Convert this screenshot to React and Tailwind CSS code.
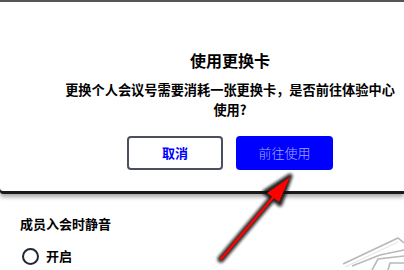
import React from "react";

const Arrow = () => (
  <svg className="absolute left-0 top-0 pointer-events-none" width="404" height="270" viewBox="0 0 404 270">
    <defs>
      <filter id="glow" x="-20%" y="-20%" width="140%" height="140%">
        <feGaussianBlur stdDeviation="1.6" />
      </filter>
    </defs>
    <g filter="url(#glow)" opacity="0.9">
      <line x1="221" y1="259" x2="276" y2="194" stroke="#111" strokeWidth="7" strokeLinecap="round" />
      <polygon points="290,176 265,192 280,204" fill="#111" stroke="#111" strokeWidth="5" strokeLinejoin="round" />
    </g>
    <line x1="221" y1="259" x2="276" y2="194" stroke="#ff0000" strokeWidth="2.6" strokeLinecap="round" />
    <polygon points="290,177 267,193 279,202" fill="#ff0000" />
  </svg>
);

const Watermark = () => (
  <svg className="absolute left-0 top-0 pointer-events-none" width="404" height="270" viewBox="0 0 404 270">
    <g fill="none" stroke="#b8b8b8" strokeWidth="1.6">
      <path d="M343 264 L398 238 L404 243" />
      <path d="M352 266 L380 255 L404 250" />
      <path d="M372 270 L378 259 L404 256" />
      <path d="M388 270 L390 263 L404 263" />
    </g>
    <g fill="none" stroke="#e2e2e2" strokeWidth="1">
      <path d="M345 267 L398 242" />
    </g>
  </svg>
);

export default function App() {
  return (
    <div
      className="relative w-[404px] h-[270px] overflow-hidden bg-white"
      style={{ fontFamily: '"Noto Sans CJK SC", "Noto Sans", sans-serif' }}
    >
      {/* dialog */}
      <div className="h-[191px] border-t-2 border-[#555] bg-white rounded-bl-[3px] shadow-[0_3px_0_#1a1a1a,0_6px_4px_rgba(0,0,0,0.35)]">
        <div className="ml-[56px] flex flex-col items-center">
          <h2 className="mt-[46px] text-[16px] leading-[24px] font-bold text-black">使用更换卡</h2>
          <p className="mt-[8px] w-[336px] text-center text-[13.2px] leading-[20px] font-bold text-black">
            更换个人会议号需要消耗一张更换卡，是否前往体验中心使用?
          </p>
          <div className="mt-[16px] flex gap-[13px]">
            <button className="w-[96px] h-[34px] rounded-[4px] border-2 border-[#4b5060] bg-white text-[13px] font-bold text-[#0000ff]">
              取消
            </button>
            <button className="w-[97px] h-[34px] rounded-[4px] bg-[#0000ff] text-[13px] font-light text-[#a4adff]">
              前往使用
            </button>
          </div>
        </div>
      </div>

      {/* settings below */}
      <div className="pl-[20px] pt-[23px]">
        <div className="text-[13px] leading-[20px] font-bold text-black">成员入会时静音</div>
        <div className="mt-[12px] flex items-center gap-[7px] pl-[2px]">
          <span className="w-[17px] h-[17px] rounded-full border-2 border-[#1f2937] bg-white" />
          <span className="text-[13px] leading-[20px] font-bold text-black">开启</span>
        </div>
      </div>

      <Watermark />
      <Arrow />
    </div>
  );
}
